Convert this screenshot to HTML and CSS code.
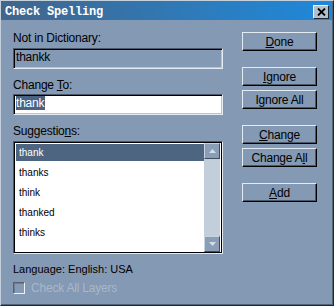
FILE: index.html
```html
<!DOCTYPE html>
<html lang="en">
<head>
  <meta charset="UTF-8">
  <title>Check Spelling</title>
  <link rel="stylesheet" href="styles.css">
</head>
<body>

<div class="window">
  <div class="titlebar">
    <span class="title">Check Spelling</span>
    <span class="close">
      <svg width="9" height="8" viewBox="0 0 9 8">
        <path d="M1 0.5 L8 7.5 M8 0.5 L1 7.5" stroke="#000" stroke-width="1.8" fill="none"/>
      </svg>
    </span>
  </div>

  <div class="content">
    <div class="left">
      <div class="label">Not in Dictionary:</div>
      <div class="field readonly">thankk</div>

      <div class="label spaced">Change <u>T</u>o:</div>
      <div class="field edit"><span class="sel">thank</span></div>

      <div class="label spaced">Suggestio<u>n</u>s:</div>
      <div class="list">
        <div class="rows">
          <div class="row selected">thank</div>
          <div class="row">thanks</div>
          <div class="row">think</div>
          <div class="row">thanked</div>
          <div class="row">thinks</div>
        </div>
        <div class="scrollbar">
          <div class="sbtn">
            <svg width="7" height="4" viewBox="0 0 7 4"><path d="M0 4 L3.5 0 L7 4 Z" fill="#d4dde7"/></svg>
          </div>
          <div class="track"></div>
          <div class="sbtn">
            <svg width="7" height="4" viewBox="0 0 7 4"><path d="M0 0 L7 0 L3.5 4 Z" fill="#d4dde7"/></svg>
          </div>
        </div>
      </div>

      <div class="label lang">Language: English: USA</div>
      <div class="check">
        <span class="box"></span>
        <span class="check-text">Check All Layers</span>
      </div>
    </div>

    <div class="right">
      <button class="btn"><u>D</u>one</button>
      <button class="btn gap-big"><u>I</u>gnore</button>
      <button class="btn gap-small">Ignore All</button>
      <button class="btn gap-big"><u>C</u>hange</button>
      <button class="btn gap-small">Change A<u>l</u>l</button>
      <button class="btn gap-big"><u>A</u>dd</button>
    </div>
  </div>
</div>

</body>
</html>
```

FILE: styles.css
```css
body {
  margin: 0;
  font-family: "Liberation Sans", Arial, sans-serif;
  font-size: 12px;
  letter-spacing: -0.2px;
  color: #000;
}
.window {
  width: 334px;
  height: 306px;
  box-sizing: border-box;
  background: #8499b3;
  border: 1px solid;
  border-color: #c4d0dc #1e2832 #1e2832 #c4d0dc;
  box-shadow: inset -1px -1px 0 #52637a;
}
.titlebar {
  height: 19px;
  margin-right: 1px;
  padding: 0 3px 0 4px;
  display: flex;
  align-items: center;
  justify-content: space-between;
  background: linear-gradient(to right, #42658b, #2a7fc4 70%, #1e88da);
}
.title {
  font-family: "Liberation Mono", "Courier New", monospace;
  font-weight: bold;
  font-size: 12px;
  color: #fff;
  letter-spacing: -0.2px;
  padding-top: 2px;
}
.close {
  width: 16px;
  height: 14px;
  box-sizing: border-box;
  margin-top: 3px;
  display: flex;
  align-items: center;
  justify-content: center;
  background: #b2c0ce;
  border: 1px solid;
  border-color: #eef2f6 #1c2630 #1c2630 #eef2f6;
}
.content {
  display: flex;
  padding: 11px 0 0 12px;
}
.left {
  width: 210px;
}
.label {
  line-height: 14px;
}
.spaced {
  margin-top: 9px;
}
.field {
  height: 21px;
  box-sizing: border-box;
  margin-top: 3px;
  line-height: 14px;
  border: 1px solid;
  border-color: #4a5868 #e4ebf2 #e4ebf2 #4a5868;
  box-shadow: inset 1px 1px 0 #000, inset -1px -1px 0 #b8c4d0;
  padding: 1px 1px 0 2px;
}
.readonly {
  background: #8499b3;
}
.edit {
  background: #fff;
  margin-top: 2px;
}
.sel {
  background: #4b6282;
  color: #fff;
  display: inline-block;
  padding-right: 1px;
}
.list {
  height: 113px;
  margin-top: 3px;
  box-sizing: border-box;
  display: flex;
  background: #fff;
  border: 1px solid;
  border-color: #4a5868 #e4ebf2 #e4ebf2 #4a5868;
  box-shadow: inset 1px 1px 0 #000, inset -1px -1px 0 #000;
  padding: 1px;
}
.rows {
  flex: 1;
  padding: 1px 0 0 1px;
}
.row {
  height: 17px;
  line-height: 17px;
  margin-bottom: 3px;
  padding-left: 3px;
  font-size: 10px;
  letter-spacing: 0;
}
.selected {
  background: #4d6580;
  color: #fff;
}
.scrollbar {
  width: 16px;
  display: flex;
  flex-direction: column;
  background: #c3cedb;
  margin-right: 1px;
}
.sbtn {
  height: 16px;
  box-sizing: border-box;
  display: flex;
  align-items: center;
  justify-content: center;
  background: #8a9fb7;
  border: 1px solid;
  border-color: #c8d3de #3e4c5c #3e4c5c #c8d3de;
}
.track {
  flex: 1;
}
.lang {
  margin-top: 8px;
  font-size: 11px;
  letter-spacing: 0;
}
.check {
  display: flex;
  align-items: center;
  gap: 6px;
  margin-top: 5px;
}
.box {
  width: 12px;
  height: 12px;
  box-sizing: border-box;
  border: 1px solid;
  border-color: #56606c #eef2f6 #eef2f6 #56606c;
  box-shadow: inset 1px 1px 0 #6e7e90;
}
.check-text {
  color: #a8b8ca;
  line-height: 14px;
}
.right {
  margin-left: 19px;
  padding-top: 1px;
  display: flex;
  flex-direction: column;
}
.btn {
  width: 75px;
  height: 19px;
  padding: 0;
  font-family: "Liberation Sans", Arial, sans-serif;
  font-size: 12px;
  letter-spacing: -0.2px;
  color: #000;
  background: #8499b3;
  border: 1px solid;
  border-color: #e4ebf2 #000 #000 #e4ebf2;
  box-shadow: inset -1px -1px 0 #4a5868;
}
.gap-big {
  margin-top: 16px;
}
.gap-small {
  margin-top: 4px;
}
```
